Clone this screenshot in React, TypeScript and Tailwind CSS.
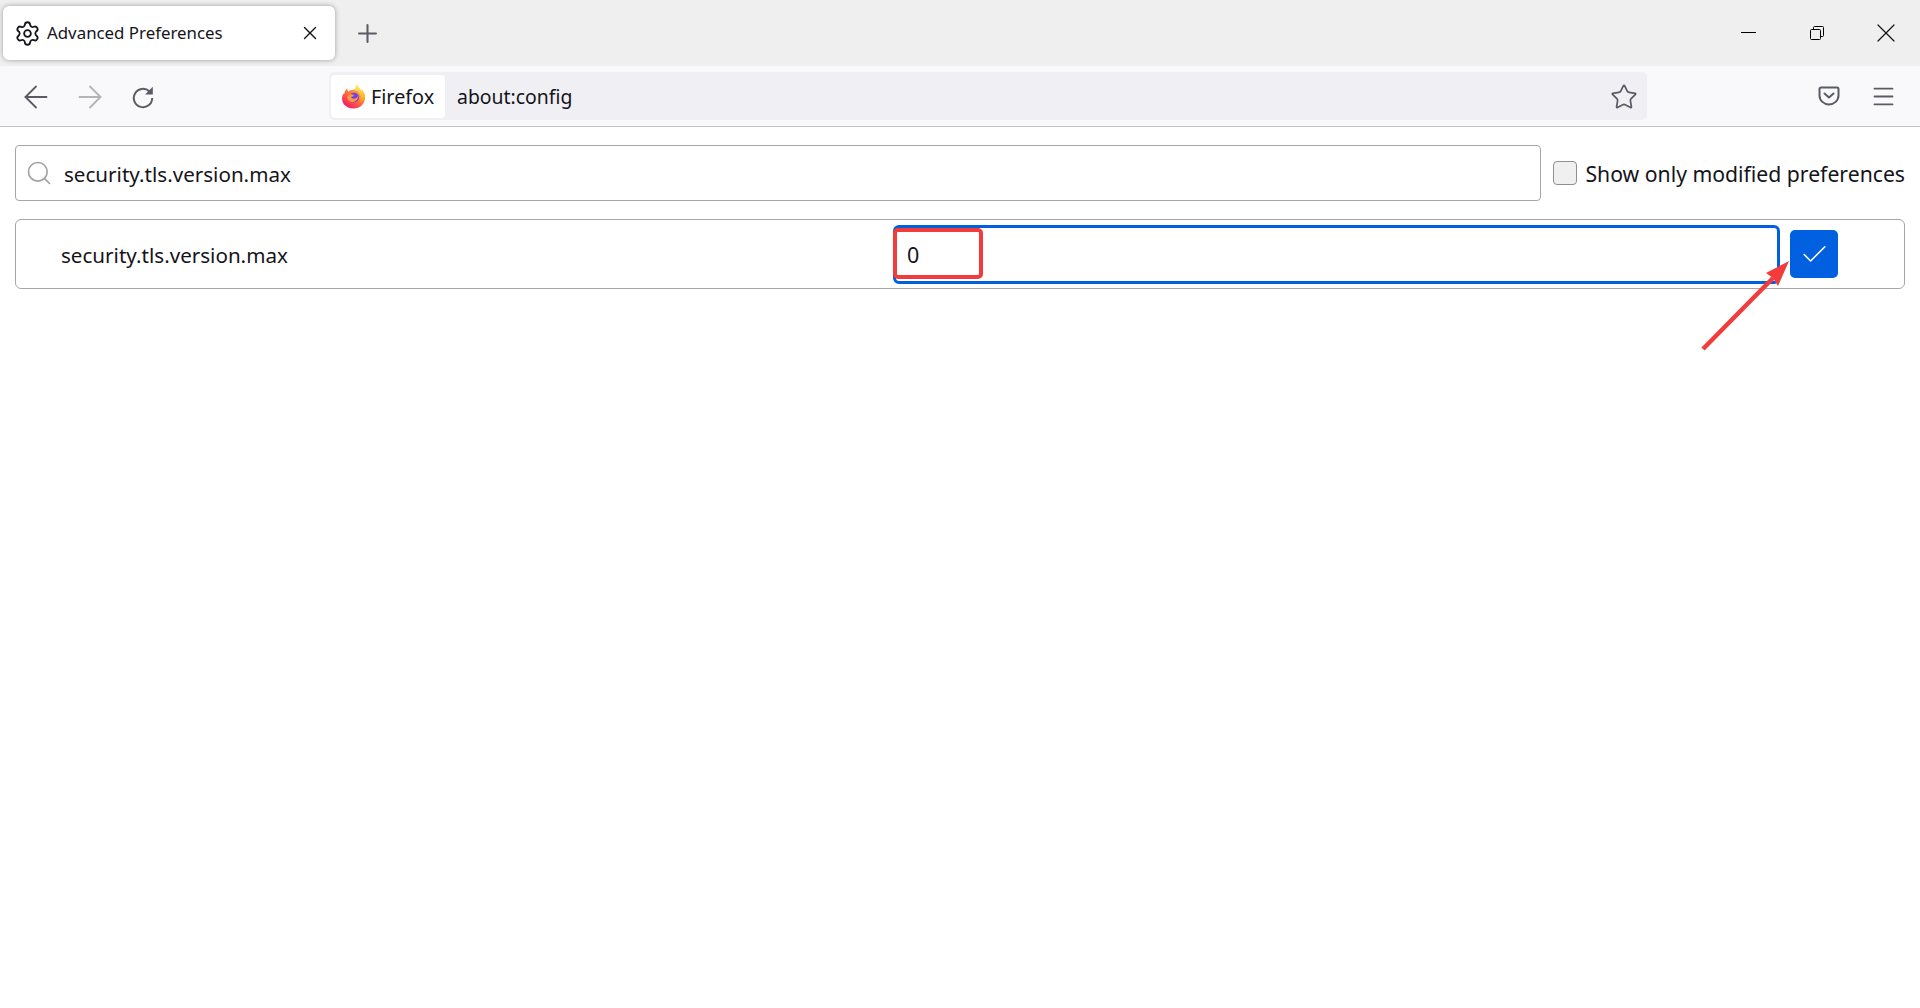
import { ArrowLeft, ArrowRight, Check, Menu, Plus, Search, Settings, Star, X } from "lucide-react"

const font = "font-['Noto_Sans','Open_Sans',sans-serif]"

function FirefoxLogo() {
  return (
    <svg width="25" height="25" viewBox="0 0 24 24">
      <defs>
        <linearGradient id="ffBody" x1="0.8" y1="0.1" x2="0.2" y2="0.95">
          <stop offset="0" stopColor="#ffbd2e" />
          <stop offset="0.5" stopColor="#ff7139" />
          <stop offset="1" stopColor="#f5156c" />
        </linearGradient>
        <linearGradient id="ffTop" x1="0.5" y1="0" x2="0.5" y2="1">
          <stop offset="0" stopColor="#fff36e" />
          <stop offset="1" stopColor="#ff980e" />
        </linearGradient>
      </defs>
      <path d="M2.200 9.500C1.300 11 1 12.600 1 14c0 5.400 4.600 9.600 11 9.600S23 19 23 13.200c0-3-1.200-6-3.400-8.200.3 1.200.2 2.200-.2 3C18.700 4.800 17 2.500 14.500.5c.4 2.500-.8 4.300-2.500 5.300C9.800 5.500 8 6 7 7.500 6.400 6.500 6 5.500 6 4.300 4.300 5.300 3.400 7.200 3.300 9c-.4.100-.8.300-1.100.5z" fill="url(#ffBody)" />
      <path d="M14.500.5c.4 2.500-.8 4.300-2.500 5.300 3.600.2 7 3 7 7.700 0 1.500-.4 2.800-1 3.900 3-1.200 5-3.400 5-6 0-1.500-.8-3.600-3.400-6.400.3 1.200.2 2.200-.2 3C18.700 4.800 17 2.500 14.500.5z" fill="url(#ffTop)" />
      <circle cx="12.500" cy="13" r="4.700" fill="#7542e5" />
      <path d="M6.500 11.500c1.500-1.800 4-2 5.500-1 1 .7-.5 1.500-1.500 1.500-1 .1-1 1.500.5 2 2.500.7 4.500-.6 5.500-2.500-.2 3.500-3 6.200-6 5.800-3-.4-5.500-3-4-5.800z" fill="#ff9a3d" />
    </svg>
  )
}

function PocketIcon() {
  return (
    <svg width="22" height="20" viewBox="0 0 22 20" fill="none" stroke="#5b5b66" strokeWidth="2">
      <path d="M3 1.500h16A1.500 1.500 0 0 1 20.500 3v6.500C20.500 14.500 16 18.500 11 18.500S1.500 14.500 1.500 9.500V3A1.500 1.500 0 0 1 3 1.500z" />
      <path d="M6.500 7.500L11 11.500l4.500-4" strokeLinecap="round" strokeLinejoin="round" />
    </svg>
  )
}

function ReloadIcon() {
  return (
    <svg width="24" height="24" viewBox="0 0 24 24" fill="none">
      <path d="M18.500 6.500A9.200 9.200 0 1 0 21.200 13" stroke="#5b5b66" strokeWidth="2" />
      <path d="M21.800 1.800v7.700h-7.700z" fill="#5b5b66" />
    </svg>
  )
}

function MinimizeIcon() {
  return (
    <svg width="15" height="1" viewBox="0 0 15 1">
      <rect width="15" height="1" fill="#000" />
    </svg>
  )
}

function RestoreIcon() {
  return (
    <svg width="14" height="14" viewBox="0 0 14 14" fill="none" stroke="#000" strokeWidth="1">
      <rect x="0.500" y="3.500" width="10" height="10" rx="1" />
      <path d="M3.500 3.500V1.500a1 1 0 0 1 1-1h8a1 1 0 0 1 1 1v8a1 1 0 0 1-1 1h-2" />
    </svg>
  )
}

export default function App() {
  return (
    <div className={`h-[1008px] overflow-hidden bg-white text-[#15141a] ${font}`}>
      {/* tab strip */}
      <div className="h-[66px] bg-[#efeff0] flex items-start pt-[6px] pl-[3px]">
        <div className="w-[332px] h-[54px] bg-white rounded-[6px] shadow-[0_0_5px_rgba(0,0,0,0.35)] flex items-center pl-[11px] pr-[14px]">
          <Settings size={27} strokeWidth={1.600} />
          <span className="ml-[6px] flex-1 text-[16.850px]">Advanced Preferences</span>
          <X size={22} strokeWidth={1.500} />
        </div>
        <div className="ml-[18px] h-[54px] flex items-center text-[#5b5b66]">
          <Plus size={29} strokeWidth={1.700} />
        </div>
        <div className="ml-auto h-[54px] flex items-center">
          <div className="w-[69px] pb-[2px] flex justify-center"><MinimizeIcon /></div>
          <div className="w-[69px] pr-[2px] flex justify-center"><RestoreIcon /></div>
          <div className="w-[68px] flex justify-center"><X size={32} strokeWidth={0.900} /></div>
        </div>
      </div>

      {/* toolbar */}
      <div className="h-[61px] bg-[#f9f9fb] border-b border-[#c4c4c6] flex items-center pl-[18px] pr-[23px]">
        <div className="flex items-center gap-[18px] pt-[2px] text-[#5b5b66] w-[311px]">
          <ArrowLeft size={36} strokeWidth={1.200} />
          <ArrowRight size={36} strokeWidth={1.200} className="text-[#b3b3b8]" />
          <span className="ml-[5px]"><ReloadIcon /></span>
        </div>
        <div className="w-[1318px] h-[48px] bg-[#f0f0f4] rounded-[5px] flex items-center pl-[2px] pr-[9px]">
          <div className="h-[43px] w-[114px] bg-white rounded-[4px] flex items-center pl-[10px] gap-[5px]">
            <FirefoxLogo />
            <span className="pt-[2px] text-[19.800px]">Firefox</span>
          </div>
          <span className="ml-[12px] pt-[2px] flex-1 text-[19.400px]">about:config</span>
          <Star size={28} strokeWidth={1.500} className="mt-[1px] text-[#5b5b66]" />
        </div>
        <div className="ml-auto flex items-center gap-[30px] text-[#5b5b66]">
          <PocketIcon />
          <Menu size={27} strokeWidth={1.600} />
        </div>
      </div>

      {/* about:config page */}
      <div className="relative px-[15px] pt-[18px]">
        <div className="flex items-center h-[56px]">
          <div className="w-[1527px] h-[56px] border border-[#a6a6a6] rounded-[4px] flex items-center pl-[9px]">
            <Search size={28} strokeWidth={1.400} className="text-[#a0a0a0]" />
            <span className="ml-[11px] pt-[2px] text-[20.600px]">security.tls.version.max</span>
          </div>
          <div className="ml-[12px] w-[24px] h-[24px] rounded-[4px] bg-[#f0f0f0] border border-[#8f8f8f]" />
          <span className="ml-[8px] pt-[2px] text-[21.200px] whitespace-nowrap">Show only modified preferences</span>
        </div>

        <div className="mt-[18px] h-[70px] border border-[#a6a6a6] rounded-[6px] flex items-center pl-[45px]">
          <span className="w-[832px] pt-[2px] text-[20.600px]">security.tls.version.max</span>
          <div className="w-[887px] h-[59px] border-[3px] border-[#0060df] rounded-[6px] flex items-center pl-[11px] pt-[2px] text-[21.500px]">0</div>
          <div className="ml-[10px] w-[48px] h-[48px] bg-[#0060df] rounded-[5px] flex items-center justify-center pt-[1px] text-white">
            <Check size={31} strokeWidth={1.200} />
          </div>
        </div>

        {/* red annotations */}
        <div className="absolute left-[893px] top-[101px] w-[90px] h-[51px] border-[4px] border-[#f23c3c] rounded-[5px]" />
        <svg className="absolute left-[1695px] top-[130px]" width="105" height="100" viewBox="0 0 105 100" fill="none">
          <path d="M8 92L78 21" stroke="#f23c3c" strokeWidth="4.500" />
          <path d="M94 4L83 29 78 21 71 16z" fill="#f23c3c" />
        </svg>
      </div>
    </div>
  )
}
